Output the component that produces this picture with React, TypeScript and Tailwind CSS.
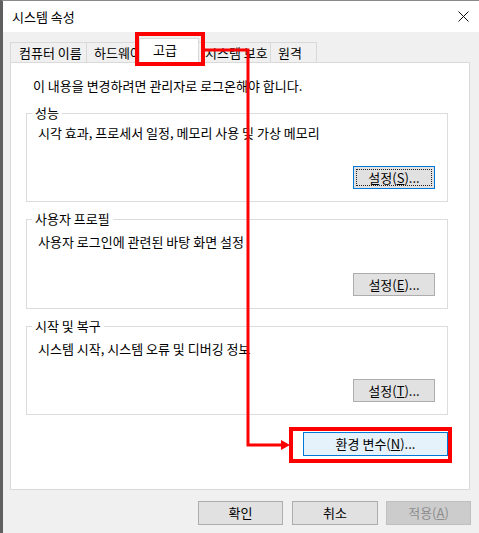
const FONT = "font-['Noto_Sans_CJK_KR','Liberation_Sans',sans-serif]";

type GroupProps = {
  title: string;
  text: string;
  label: string;
  hot: string;
  textPt: string;
  btnMt: string;
  mt: string;
  focused?: boolean;
};

const Group = ({ title, text, label, hot, textPt, btnMt, mt, focused }: GroupProps) => (
  <fieldset className={`ml-[15px] w-[422px] border border-[#dcdcdc] ${mt}`}>
    <legend className="ml-[5px] px-[3px] leading-[16px]">{title}</legend>
    <div className={`flex flex-col pb-[12px] ${textPt}`}>
      <div className="pl-[11px] leading-[16px] whitespace-nowrap">{text}</div>
      <div
        className={`self-end mr-[12px] h-[23px] w-[82px] flex items-center justify-center bg-[#e1e1e1] border ${
          focused ? "border-[#0078d7] p-[2px]" : "border-[#adadad]"
        } ${btnMt}`}
      >
        {focused ? (
          <div className="w-full h-full border border-dotted border-[#222] flex items-center justify-center">
            {label}(<u>{hot}</u>)...
          </div>
        ) : (
          <span>
            {label}(<u>{hot}</u>)...
          </span>
        )}
      </div>
    </div>
  </fieldset>
);

const tabs = [
  { name: "컴퓨터 이름", cls: "w-[77px] border-l pl-[8px]" },
  { name: "하드웨어", cls: "w-[54px] pl-[7px]" },
  { name: "고급", cls: "", active: true },
  { name: "시스템 보호", cls: "w-[74px] pl-[8px]" },
  { name: "원격", cls: "w-[46px] pl-[7px]" },
];

export default function App() {
  return (
    <div
      className={`relative w-[479px] h-[533px] flex flex-col bg-[#f0f0f0] border-l-[3px] border-l-[#5f5f5f] border-t border-t-[#8a8a8a] text-[13px] text-black overflow-hidden ${FONT}`}
    >
      {/* title bar */}
      <div className="h-[31px] bg-white flex items-center justify-between pl-[9px] pr-[10px] shrink-0">
        <span className="leading-[16px]">시스템 속성</span>
        <svg width="11" height="11" viewBox="0 0 11 11">
          <path d="M0.5 0.5 L10.5 10.5 M10.5 0.5 L0.5 10.5" stroke="#111" strokeWidth="1" />
        </svg>
      </div>

      {/* tabs */}
      <div className="ml-[7px] h-[30px] flex items-end">
        {tabs.map((t) =>
          t.active ? (
            <div
              key={t.name}
              className="relative z-10 -mb-px -ml-[2px] -mr-[2px] w-[60px] h-[25px] bg-white border-t border-l border-r border-[#d9d9d9] pl-[13px] pt-[3px] leading-[16px]"
            >
              {t.name}
            </div>
          ) : (
            <div
              key={t.name}
              className={`h-[20px] flex items-center border-t border-r border-[#d9d9d9] bg-[#f0f0f0] leading-[16px] whitespace-nowrap overflow-hidden ${t.cls}`}
            >
              {t.name}
            </div>
          )
        )}
      </div>

      {/* panel */}
      <div className="ml-[7px] w-[460px] h-[428px] bg-white border border-[#d9d9d9] flex flex-col shrink-0">
        <div className="pl-[22px] pt-[15px] leading-[16px] whitespace-nowrap">
          이 내용을 변경하려면 관리자로 로그온해야 합니다.
        </div>
        <Group
          title="성능"
          text="시각 효과, 프로세서 일정, 메모리 사용 및 가상 메모리"
          label="설정"
          hot="S"
          mt="mt-[11px]"
          textPt="pt-[4px]"
          btnMt="mt-[25px]"
          focused
        />
        <Group
          title="사용자 프로필"
          text="사용자 로그인에 관련된 바탕 화면 설정"
          label="설정"
          hot="E"
          mt="mt-[9px]"
          textPt="pt-[7px]"
          btnMt="mt-[23px]"
        />
        <Group
          title="시작 및 복구"
          text="시스템 시작, 시스템 오류 및 디버깅 정보"
          label="설정"
          hot="T"
          mt="mt-[9px]"
          textPt="pt-[7px]"
          btnMt="mt-[22px]"
        />
        <div className="self-end mr-[21px] mt-[17px] w-[145px] h-[24px] flex items-center justify-center bg-[#e5f1fb] border border-[#0078d7]">
          <span>
            환경 변수(<u>N</u>)...
          </span>
        </div>
      </div>

      {/* dialog buttons */}
      <div className="mt-[11px] flex justify-end pr-[8px]">
        <div className="w-[85px] h-[24px] flex items-center justify-center bg-[#e1e1e1] border border-[#adadad]">
          확인
        </div>
        <div className="ml-[9px] w-[86px] h-[24px] flex items-center justify-center bg-[#e1e1e1] border border-[#adadad]">
          취소
        </div>
        <div className="ml-[8px] w-[85px] h-[24px] flex items-center justify-center bg-[#cccccc] border border-[#bfbfbf] text-[#8c8c8c]">
          <span>
            적용(<u>A</u>)
          </span>
        </div>
      </div>

      {/* red annotation overlay */}
      <svg
        className="absolute -left-[3px] -top-px pointer-events-none z-20"
        width="479"
        height="533"
        viewBox="0 0 479 533"
      >
        <rect x="137" y="34" width="66" height="30" fill="none" stroke="#ff0000" strokeWidth="4" />
        <rect x="291" y="429" width="159" height="32" fill="none" stroke="#ff0000" strokeWidth="4" />
        <polyline
          points="205,50 248,50 248,445 283,445"
          fill="none"
          stroke="#ff0000"
          strokeWidth="3"
        />
        <polygon points="281,440 290,445 281,450" fill="#ff0000" />
      </svg>
    </div>
  );
}
